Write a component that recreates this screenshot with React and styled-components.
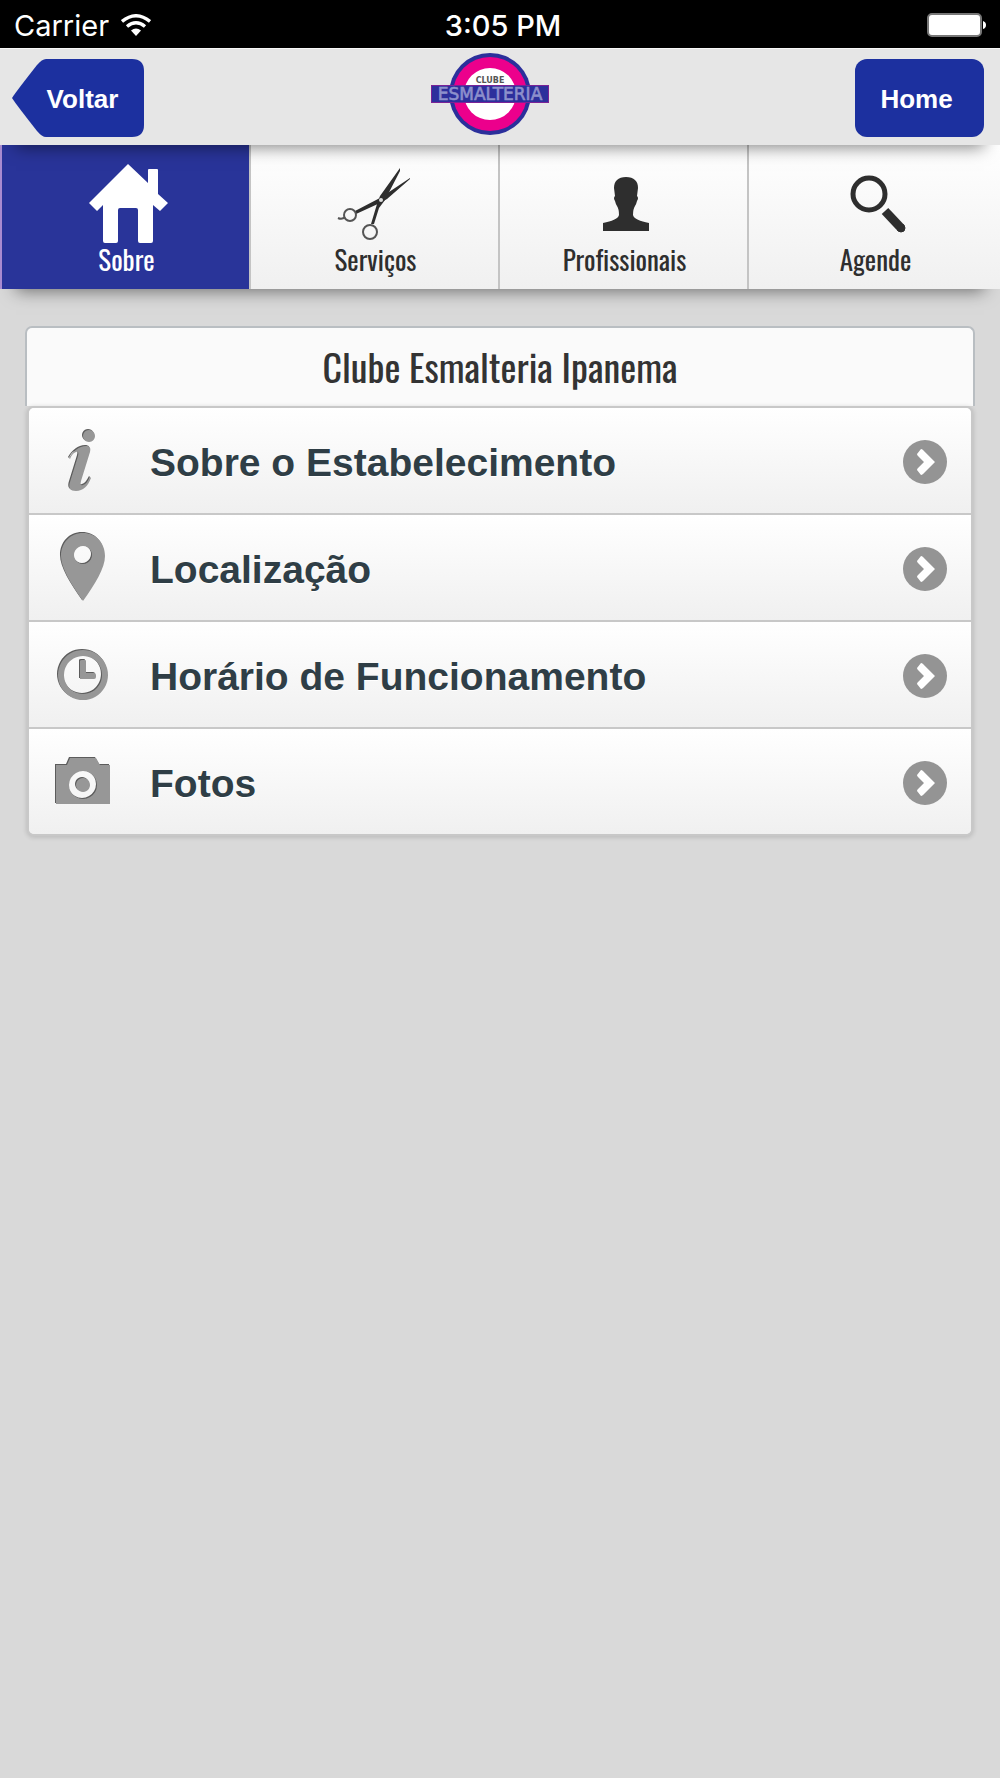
import React from "react";
import styled, { createGlobalStyle } from "styled-components";

const GlobalStyle = createGlobalStyle`
  * {
    box-sizing: border-box;
  }
  body {
    margin: 0;
    background: #d9d9d9;
    font-family: "Liberation Sans", Arial, sans-serif;
  }
`;

const tabs = [
  { name: "Sobre", icon: <HouseIcon />, active: true },
  { name: "Serviços", icon: <ScissorsIcon /> },
  { name: "Profissionais", icon: <PersonIcon /> },
  { name: "Agende", icon: <SearchIcon /> },
];

const items = [
  {
    name: "Sobre o Estabelecimento",
    shape:
      "M34 4a6 6 0 1 0 .01 0Z M14 32c4-7 10-12 17-12 4 0 5 2 4 6l-9 29c-1 4 0 5 2 4 3-1 5-4 7-8l1 1c-3 8-8 13-15 13-6 0-8-3-6-9l8-26c1-4 0-5-2-4-3 1-5 4-6 7Z",
  },
  {
    name: "Localização",
    shape:
      "M28 0C15 0 6 10 6 23c0 12 10 28 22 45 12-17 22-33 22-45C50 10 41 0 28 0Z M28 13a9 9 0 1 1-.01 0Z",
  },
  {
    name: "Horário de Funcionamento",
    shape:
      "M28 10a25 25 0 1 0 .01 0Z M28 16a19 19 0 1 1-.01 0Z M27 20h3q1 0 1 1v12h8q2 0 2 2v2q0 2-2 2H25V21q0-1 2-1Z",
  },
  {
    name: "Fotos",
    shape:
      "M1 18h11l3-7h26l4 7h10v39H1Z M28 24a14 14 0 1 0 .01 0Z M28 31a7 7 0 1 0 .01 0Z",
  },
];

function App() {
  return (
    <>
      <GlobalStyle />
      <StatusBar />
      <Header />
      <StTabs>
        {tabs.map((tab) => (
          <StTab key={tab.name} href="#" $active={tab.active}>
            {tab.icon}
            <span>{tab.name}</span>
          </StTab>
        ))}
      </StTabs>
      <StMain>
        <StTitle>Clube Esmalteria Ipanema</StTitle>
        <StList>
          {items.map((item) => (
            <StItem key={item.name}>
              <StItemLink href="#">
                <EngravedIcon shape={item.shape} />
                <StItemName>{item.name}</StItemName>
                <ArrowIcon />
              </StItemLink>
            </StItem>
          ))}
        </StList>
      </StMain>
    </>
  );
}

export default App;

function StatusBar() {
  return (
    <StStatusBar>
      <StCarrier>
        Carrier
        <svg width="30" height="22" viewBox="0 0 30 22" fill="none">
          <path d="M1 7.500Q15-4 29 7.500" stroke="#fff" strokeWidth="3.400" />
          <path d="M6 12.500Q15 5 24 12.500" stroke="#fff" strokeWidth="3.400" />
          <path d="M10 16.500Q15 12.500 20 16.500L15 22Z" fill="#fff" />
        </svg>
      </StCarrier>
      <StClock>3:05 PM</StClock>
      <StBattery>
        <svg width="60" height="24" viewBox="0 0 60 24">
          <rect x="2" y="1" width="53" height="22" rx="4" fill="#fff" stroke="#777" strokeWidth="2" />
          <path d="M57 8q3 1 3 4t-3 4Z" fill="#fff" />
        </svg>
      </StBattery>
    </StStatusBar>
  );
}

function Header() {
  return (
    <StHeader>
      <StBackButton>
        <svg width="132" height="78" viewBox="0 0 132 78">
          <path
            d="M0 39Q3 34 25 6Q30 0 34 0H120Q132 0 132 12V66Q132 78 120 78H34Q30 78 25 72Q3 44 0 39Z"
            fill="#1c309f"
          />
        </svg>
        <span>Voltar</span>
      </StBackButton>
      <StLogo width="118" height="84" viewBox="0 0 118 84" role="img" aria-label="Clube Esmalteria">
        <circle cx="59" cy="42" r="41" fill="#2b2f9b" />
        <circle cx="59" cy="42" r="37" fill="#ec008c" />
        <circle cx="59" cy="42" r="26" fill="#fff" />
        <text x="59" y="31" fontSize="8" fontWeight="700" fill="#555" textAnchor="middle">
          CLUBE
        </text>
        <rect x="0" y="33" width="118" height="18" fill="#7a2296" />
        <rect x="1" y="34" width="116" height="16" fill="#2d2f9c" />
        <text x="59" y="48" fontSize="17" fill="#8d90cc" stroke="#8d90cc" strokeWidth="0.6" textAnchor="middle">
          ESMALTERIA
        </text>
      </StLogo>
      <StHomeButton>Home</StHomeButton>
    </StHeader>
  );
}

function HouseIcon() {
  return (
    <svg width="80" height="80" viewBox="0 0 80 80" fill="#fff">
      <path d="M41 0L61 19V6q0-1 1-1h8q1 0 1 1v24l10 9-8 8-7-6v36q0 2-2 2H53q-2 0-2-2V46q0-2-2-2H33q-2 0-2 2v31q0 2-2 2H18q-2 0-2-2V41l-6 6-8-8Z" />
    </svg>
  );
}

function ScissorsIcon() {
  return (
    <svg width="80" height="80" viewBox="0 0 80 80" fill="#2e2e2e">
      <path d="M64 4L44 32l-3 8L35 60h3l5-16 6-8L64 7Z" />
      <path d="M74 14L50 30l-8 5L19 47l1 3 24-11 7-4L74 15Z" />
      <circle cx="45" cy="36" r="2" fill="#ddd" />
      <g fill="none" stroke="#555" strokeWidth="2">
        <circle cx="14" cy="51" r="6" />
        <ellipse cx="34" cy="68" rx="7" ry="7" />
        <path d="M2 54q4 2 7-1" />
      </g>
    </svg>
  );
}

function PersonIcon() {
  return (
    <svg width="80" height="80" viewBox="0 0 80 80" fill="#2e2e2e">
      <path d="M41 13c8 0 12 4 12 11l-1 8q2 2 0 5-1 4-2 5-2 3-2 9c1 4 7 6 16 8v8H18v-8c9-2 15-4 16-8q0-6-2-9-1-1-2-5-2-3 0-5l-1-8c0-7 4-11 12-11Z" />
    </svg>
  );
}

function SearchIcon() {
  return (
    <svg width="80" height="80" viewBox="0 0 80 80" fill="none" stroke="#2e2e2e">
      <circle cx="33" cy="30" r="16" strokeWidth="5" />
      <path d="M49 47L65 64" strokeWidth="9" />
      <circle cx="65" cy="64" r="4" fill="#2e2e2e" />
    </svg>
  );
}

// the dark copy underneath shows on the top left edges and makes the icon look pressed in
function EngravedIcon({ shape }) {
  return (
    <svg width="58" height="72" viewBox="0 0 58 72" fillRule="evenodd">
      <path d={shape} fill="#5c5c5c" />
      <path d={shape} fill="#979797" transform="translate(1 1)" />
    </svg>
  );
}

function ArrowIcon() {
  return (
    <svg width="44" height="46" viewBox="0 -2 44 46" fill="none">
      <circle cx="22" cy="22" r="22" fill="#949494" />
      <path d="M14 14l4-5q1 0 2 1l12 12-12 12q-1 1-2 1l-4-5q0-1 1-2l6-6-6-6q-1-1-1-2Z" fill="#fff" />
    </svg>
  );
}

const StStatusBar = styled.div`
  display: grid;
  grid-template-columns: 1fr auto 1fr;
  align-items: center;
  height: 48px;
  padding: 2px 14px 0 14px;
  background: #000;
  color: #fff;
  font-family: Inter, sans-serif;
  font-size: 29px;
`;
const StCarrier = styled.div`
  display: flex;
  align-items: center;
  gap: 12px;
`;
const StClock = styled.div`
  padding-left: 6px;
  font-weight: 500;
`;
const StBattery = styled.div`
  display: flex;
  justify-content: flex-end;
`;
const StHeader = styled.header`
  position: relative;
  z-index: 2;
  display: flex;
  justify-content: space-between;
  align-items: center;
  height: 97px;
  padding: 2px 16px 0 12px;
  border-top: 1px solid #f8f8f8;
  background: #e6e6e6;
  box-shadow: 0 18px 16px -16px rgba(0, 0, 0, 0.5);
`;
const StHeaderButton = styled.button`
  height: 78px;
  padding: 2px 0 0;
  border: 0;
  color: #fff;
  font-family: "Liberation Sans", Arial, sans-serif;
  font-size: 26px;
  font-weight: 700;
  cursor: pointer;
`;
const StBackButton = styled(StHeaderButton)`
  position: relative;
  width: 132px;
  padding-left: 9px;
  background: none;
  svg {
    position: absolute;
    inset: 0;
  }
  span {
    position: relative;
  }
`;
const StHomeButton = styled(StHeaderButton)`
  width: 129px;
  padding-right: 6px;
  border-radius: 12px;
  background: #1c309f;
`;
const StLogo = styled.svg`
  margin: 0 20px 9px 0;
  font-family: "DejaVu Sans", sans-serif;
`;
const StTabs = styled.nav`
  position: relative;
  z-index: 1;
  display: grid;
  grid-template-columns: repeat(3, 249fr) 253fr;
  height: 144px;
  box-shadow: 0 18px 16px -16px rgba(0, 0, 0, 0.5);
`;
const StTab = styled.a`
  display: flex;
  flex-direction: column;
  align-items: center;
  padding: 19px 0 0 2px;
  border-left: 2px solid ${({ $active }) => ($active ? "#a98bd0" : "#c4c4c4")};
  background: ${({ $active }) =>
    $active ? "#293499" : "linear-gradient(#fff, #f0f0f0)"};
  color: ${({ $active }) => ($active ? "#fff" : "#2e2e2e")};
  font-family: Oswald, "Roboto Condensed", "Liberation Sans Narrow", sans-serif;
  font-size: 27px;
  font-variant-ligatures: none;
  line-height: 30px;
  text-decoration: none;
  svg {
    overflow: visible;
  }
`;
const StMain = styled.main`
  padding: 37px 25px;
`;
const StTitle = styled.h1`
  height: 80px;
  margin: 0;
  border: 2px solid #b9bec2;
  border-bottom: 0;
  border-radius: 7px 7px 0 0;
  background: #fafafa;
  color: #333;
  font-family: Oswald, "Roboto Condensed", "Liberation Sans Narrow", sans-serif;
  font-size: 38px;
  font-weight: 400;
  line-height: 76px;
  text-align: center;
`;
const StList = styled.ul`
  margin: 0 2px;
  padding: 0;
  border: 2px solid #c8c8c8;
  border-radius: 7px;
  background: #f0f0f0;
  box-shadow: 0 1px 4px 1px rgba(0, 0, 0, 0.12);
  list-style: none;
  overflow: hidden;
`;
const StItem = styled.li`
  & + & {
    border-top: 2px solid #c8c8c8;
  }
`;
const StItemLink = styled.a`
  display: flex;
  align-items: center;
  height: 105px;
  padding: 0 24px 0 25px;
  background: linear-gradient(#fff, #f0f0f0);
  color: #2f3e46;
  text-decoration: none;
`;
const StItemName = styled.span`
  flex: 1;
  padding-top: 5px;
  margin-left: 38px;
  font-size: 39px;
  font-weight: 700;
  text-shadow: 0 1px 0 #fff;
`;
